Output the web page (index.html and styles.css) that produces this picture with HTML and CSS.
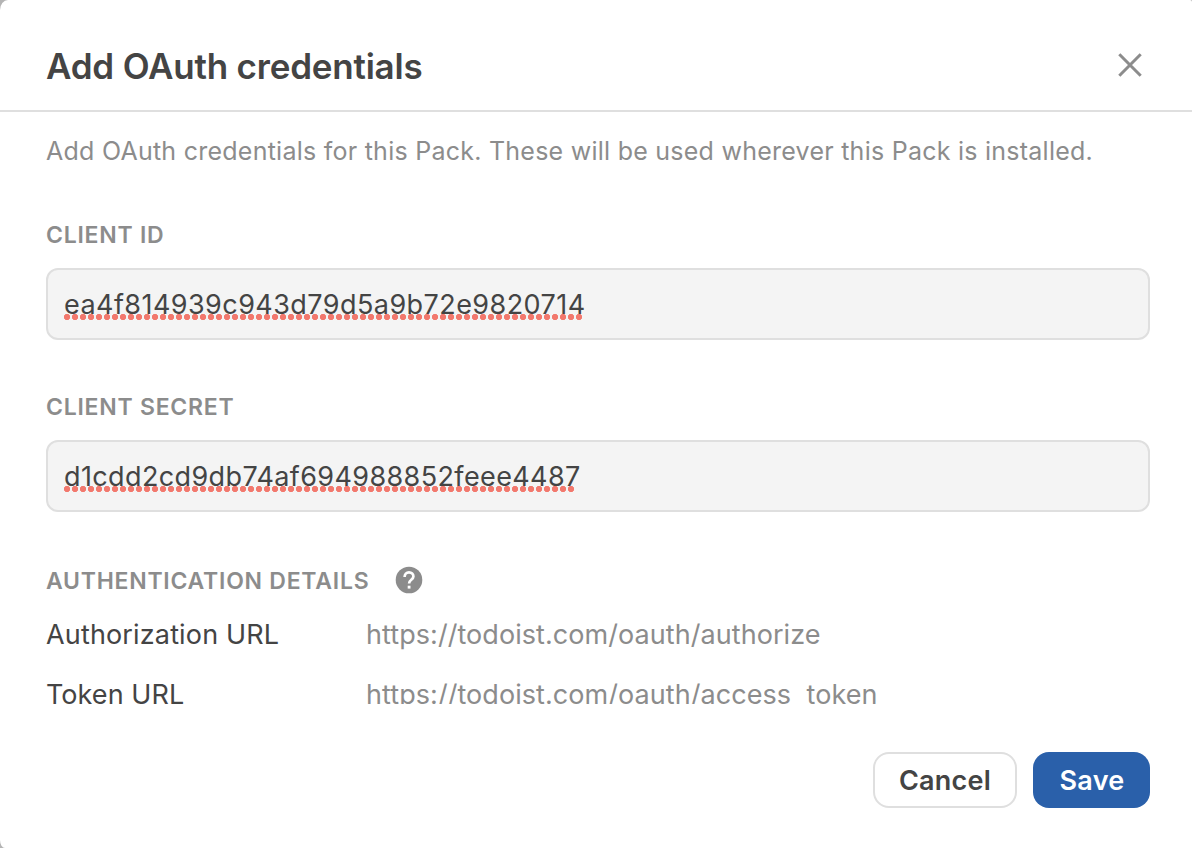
FILE: index.html
```html
<!DOCTYPE html>
<html lang="en">
<head>
<meta charset="utf-8">
<title>Add OAuth credentials</title>
<link rel="stylesheet" href="styles.css">
</head>
<body>
<main class="modal" role="dialog" aria-labelledby="title">
  <header class="modal-header">
    <h1 class="title" id="title">Add OAuth credentials</h1>
    <button class="close" aria-label="Close">
      <svg width="24" height="24" viewBox="0 0 24 24"><path d="M1.3 1.3 22.7 22.7M22.7 1.3 1.3 22.7" fill="none" stroke="#8c8c8c" stroke-width="3"/></svg>
    </button>
  </header>
  <div class="modal-body">
    <p class="description">Add OAuth credentials for this Pack. These will be used wherever this Pack is installed.</p>
    <section class="field">
      <div class="label">CLIENT ID</div>
      <div class="input"><span class="misspelled client-id">ea4f814939c943d79d5a9b72e9820714</span></div>
    </section>
    <section class="field">
      <div class="label">CLIENT SECRET</div>
      <div class="input"><span class="misspelled client-secret">d1cdd2cd9db74af694988852feee4487</span></div>
    </section>
    <div class="details-heading">
      <div class="label details-label">AUTHENTICATION DETAILS</div>
      <svg width="28" height="28" viewBox="0 0 28 28"><circle cx="14" cy="14" r="13.3" fill="#8c8c8c"/><path d="M9.6 11C9.6 8.2 11.4 6.3 14 6.3s4.4 1.8 4.4 4.2c0 3.3-4.3 3.4-4.3 7" fill="none" stroke="#fff" stroke-width="2.7"/><path d="M12.7 19.7h2.8v2.9h-2.8z" fill="#fff"/></svg>
    </div>
    <dl class="details">
      <dt class="term">Authorization URL</dt>
      <dd class="value">https://todoist.com/oauth/authorize</dd>
      <dt class="term token-term">Token URL</dt>
      <dd class="value">https://todoist.com/oauth/access<span class="underscore">_</span>token</dd>
    </dl>
  </div>
  <footer class="modal-footer">
    <button class="button cancel">Cancel</button>
    <button class="button save">Save</button>
  </footer>
</main>
</body>
</html>
```
FILE: styles.css
```css
* { box-sizing: border-box; }

body {
  margin: 0;
  background: #b4b4b4;
  color: #444;
  font-family: Inter, "Liberation Sans", sans-serif;
}

.modal {
  height: 848px;
  display: flex;
  flex-direction: column;
  background: #fff;
  border-radius: 8px 2px 0 5px / 10px 2px 0 8px;
  overflow: hidden;
}

.modal-header {
  height: 112px;
  padding: 22px 50.5px 0 46px;
  display: flex;
  align-items: center;
  justify-content: space-between;
  border-bottom: 2px solid #dfdfdf;
}

.title {
  margin: 0;
  font-size: 35px;
  font-weight: 600;
  line-height: 44px;
  letter-spacing: -0.2px;
}

.close {
  display: flex;
  margin: 0 0 2px;
  padding: 0;
  border: 0;
  background: none;
}

.modal-body { padding: 23px 42px 0 46px; }

.description {
  margin: 0 0 56px;
  color: #8c8c8c;
  font-size: 25px;
  line-height: 32px;
  letter-spacing: 0.25px;
  white-space: nowrap;
}

.field { margin-bottom: 55px; }

.label {
  color: #8c8c8c;
  font-size: 23px;
  font-weight: 600;
  line-height: 24px;
  letter-spacing: 0.75px;
}

.input {
  height: 72px;
  margin-top: 21px;
  padding: 1px 16px 0;
  display: flex;
  align-items: center;
  border: 2px solid #dfdfdf;
  border-radius: 12px;
  background: #f4f4f4;
  font-size: 27px;
  line-height: 35px;
}

/* Spell-check dots under the text */
.misspelled {
  white-space: nowrap;
  background: radial-gradient(circle at 3px 3px, #f2786d 2.8px, transparent 3.5px) 0 27px / 8px 6px repeat-x;
}
.client-id { width: 520px; letter-spacing: 0.44px; }
.client-secret { width: 512px; letter-spacing: 0.38px; }

.details-heading {
  display: flex;
  align-items: center;
  justify-content: space-between;
  width: 377px;
  height: 26px;
}
.details-label { padding-top: 2px; }

.details {
  display: grid;
  grid-template-columns: 320px 1fr;
  grid-template-rows: 34px 26px;
  row-gap: 26px;
  margin: 25px 0 0;
  font-size: 27px;
  line-height: 34px;
}
.term { letter-spacing: 0.15px; }
.token-term { letter-spacing: 0.05px; }
.term, .value { overflow: hidden; }
.value {
  margin: 0;
  color: #8c8c8c;
  letter-spacing: 0.06px;
}
.underscore { padding: 0 1.5px; vertical-align: -3px; line-height: 1; }

.modal-footer {
  display: flex;
  justify-content: flex-end;
  gap: 16px;
  padding: 48px 42px 0;
}

.button {
  height: 56px;
  padding: 1px 0 0;
  border-radius: 16px;
  font: 600 27px/35px Inter, "Liberation Sans", sans-serif;
  letter-spacing: 0.25px;
}
.cancel {
  width: 144px;
  border: 2px solid #dfdfdf;
  background: #fff;
  color: #444;
}
.save {
  width: 117px;
  padding-left: 1px;
  border: 0;
  background: #2a60aa;
  color: #fff;
}
```
